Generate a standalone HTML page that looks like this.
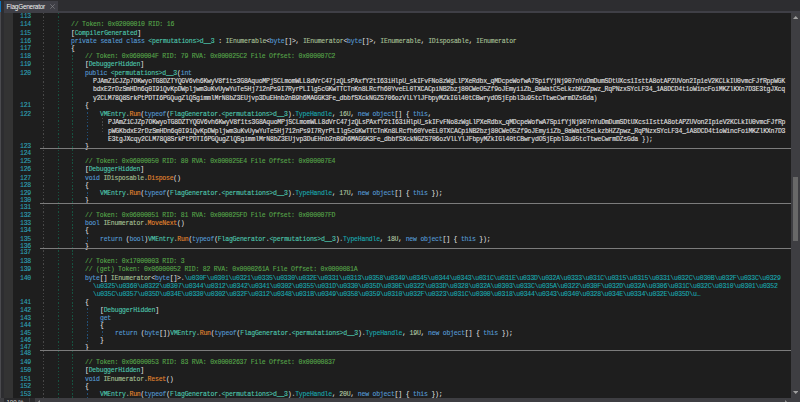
<!DOCTYPE html>
<html><head><meta charset="utf-8"><title>FlagGenerator</title>
<style>
html,body{margin:0;padding:0;background:#1e1e1e;}
body{width:800px;height:402px;overflow:hidden;position:relative;font-family:"Liberation Mono",monospace;font-size:6.5000px;line-height:8.0px;color:#dcdcdc;}
#tabbar{position:absolute;left:0;top:0;width:800px;height:12.5px;background:#2d2d30;}
#tabline{position:absolute;left:0;top:11px;width:800px;height:1.5px;background:#3f3f46;}
#tab{position:absolute;left:3.9px;top:1px;width:54.2px;height:11.3px;background:#3f3f46;}
#tabtxt{position:absolute;left:6.6px;top:1.7px;font-family:"Liberation Sans",sans-serif;font-size:6.4px;line-height:9px;color:#f1f1f1;white-space:pre;letter-spacing:-0.22px;}
#tabx{position:absolute;left:50px;top:4.1px;width:5px;height:5px;}
#leftedge{position:absolute;left:0;top:0;width:4px;height:402px;background:#2d2d30;}
#leftdark{position:absolute;left:0;top:0;width:4px;height:12px;background:#2d2d30;}
#leftlight{position:absolute;left:0;top:12px;width:0.8px;height:390px;background:#4a4a4e;}
#blue{position:absolute;left:0;top:1px;width:1.1px;height:11px;background:#1272b8;}
#code{position:absolute;left:0;top:0;width:791px;height:398px;overflow:hidden;}
#margin{position:absolute;left:4px;top:12.6px;width:9px;height:385.4px;background:#333333;}
#vscroll{position:absolute;left:791px;top:12.6px;width:9px;height:389.4px;background:#3e3e42;}
#thumb{position:absolute;left:793px;top:177.3px;width:5px;height:63.3px;background:#686868;}
#hscroll{position:absolute;left:0;top:397.8px;width:800px;height:4.2px;background:#3e3e42;}
#zoom{position:absolute;left:4.2px;top:398.4px;width:24.8px;height:4px;background:#29292b;}
#zoom2{position:absolute;left:30px;top:398.4px;width:5px;height:4px;background:#29292b;}
#zoomtxt{position:absolute;left:6.5px;top:399.4px;font-family:"Liberation Sans",sans-serif;font-size:6px;line-height:7px;color:#d8d8d8;white-space:pre;}
.ln,.row{letter-spacing:-0.2200px;-webkit-text-stroke:0.1px;}
.ln{position:absolute;top:0;transform-origin:0 0;left:20.05px;color:#2fa3b8;white-space:pre;height:8.0px;}
.row{position:absolute;top:0;transform-origin:0 0;white-space:pre;height:8.0px;}
.sep{position:absolute;left:40px;width:751px;height:1px;background:#7c7c7c;}
.g{position:absolute;width:1px;}
.c{color:#57a64a} .k{color:#569cd6} .t{color:#4ec9b0} .i{color:#a9c298} .m{color:#e3862f}
.n{color:#b5cea8} .p{color:#dcdcdc} .a{color:#e0e0e0} .h{color:#c0c0c0} .r{color:#1aa9b0} .o{color:#b4b4b4}
</style></head><body>
<div id="tabbar"></div><div id="tabline"></div>
<div id="leftedge"></div><div id="leftdark"></div><div id="leftlight"></div><div id="blue"></div>
<div id="tab"></div><div id="tabtxt">FlagGenerator</div>
<svg id="tabx" viewBox="0 0 5 5"><path d="M0.3 0.3L4.7 4.7M4.7 0.3L0.3 4.7" stroke="#8e8e92" stroke-width="0.6" fill="none"/></svg>
<div id="margin"></div>
<div id="code">
<div class="g" style="left:43.00px;top:12.50px;height:385.50px;background-image:repeating-linear-gradient(to bottom,#484848 0 1.4px,transparent 1.4px 3.25px)"></div>
<div class="g" style="left:57.80px;top:12.50px;height:385.50px;background-image:repeating-linear-gradient(to bottom,#175240 0 1.4px,transparent 1.4px 3.25px)"></div>
<div class="g" style="left:72.30px;top:52.00px;height:346.00px;background-image:repeating-linear-gradient(to bottom,#175240 0 1.4px,transparent 1.4px 3.25px)"></div>
<div class="g" style="left:87.00px;top:109.00px;height:32.00px;background-image:repeating-linear-gradient(to bottom,#224f77 0 1.4px,transparent 1.4px 3.25px)"></div>
<div class="g" style="left:87.00px;top:189.00px;height:6.50px;background-image:repeating-linear-gradient(to bottom,#224f77 0 1.4px,transparent 1.4px 3.25px)"></div>
<div class="g" style="left:87.00px;top:234.00px;height:7.50px;background-image:repeating-linear-gradient(to bottom,#224f77 0 1.4px,transparent 1.4px 3.25px)"></div>
<div class="g" style="left:87.00px;top:305.00px;height:37.50px;background-image:repeating-linear-gradient(to bottom,#224f77 0 1.4px,transparent 1.4px 3.25px)"></div>
<div class="g" style="left:87.00px;top:390.00px;height:8.00px;background-image:repeating-linear-gradient(to bottom,#224f77 0 1.4px,transparent 1.4px 3.25px)"></div>
<div class="g" style="left:101.70px;top:328.00px;height:8.00px;background-image:repeating-linear-gradient(to bottom,#224f77 0 1.4px,transparent 1.4px 3.25px)"></div>
<div class="g" style="left:102.00px;top:117.50px;height:16.50px;background-image:repeating-linear-gradient(to bottom,#484848 0 1.4px,transparent 1.4px 3.25px)"></div>
<div class="ln" style="transform:translateY(13.0px) rotate(0.01deg)">113</div>
<div class="ln" style="transform:translateY(21.0px) rotate(0.01deg)">114</div>
<div class="row" style="left:70.74px;transform:translateY(21.0px) rotate(0.01deg)"><span class="c">// Token: 0x02000010 RID: 16</span></div>
<div class="ln" style="transform:translateY(29.5px) rotate(0.01deg)">115</div>
<div class="row" style="left:70.74px;transform:translateY(29.5px) rotate(0.01deg)"><span class="p">[</span><span class="t">CompilerGenerated</span><span class="p">]</span></div>
<div class="ln" style="transform:translateY(37.5px) rotate(0.01deg)">116</div>
<div class="row" style="left:70.74px;transform:translateY(37.5px) rotate(0.01deg)"><span class="k">private sealed class </span><span class="t">&lt;permutations&gt;d__3</span><span class="p"> : </span><span class="i">IEnumerable</span><span class="p">&lt;</span><span class="k">byte</span><span class="p">[]&gt;, </span><span class="i">IEnumerator</span><span class="p">&lt;</span><span class="k">byte</span><span class="p">[]&gt;, </span><span class="i">IEnumerable</span><span class="p">, </span><span class="i">IDisposable</span><span class="p">, </span><span class="i">IEnumerator</span></div>
<div class="ln" style="transform:translateY(45.0px) rotate(0.01deg)">117</div>
<div class="row" style="left:70.74px;transform:translateY(45.0px) rotate(0.01deg)"><span class="p">{</span></div>
<div class="ln" style="transform:translateY(53.0px) rotate(0.01deg)">118</div>
<div class="row" style="left:85.46px;transform:translateY(53.0px) rotate(0.01deg)"><span class="c">// Token: 0x0600004F RID: 79 RVA: 0x000025C2 File Offset: 0x000007C2</span></div>
<div class="ln" style="transform:translateY(61.0px) rotate(0.01deg)">119</div>
<div class="row" style="left:85.46px;transform:translateY(61.0px) rotate(0.01deg)"><span class="p">[</span><span class="t">DebuggerHidden</span><span class="p">]</span></div>
<div class="ln" style="transform:translateY(70.0px) rotate(0.01deg)">120</div>
<div class="row" style="left:85.46px;transform:translateY(70.0px) rotate(0.01deg)"><span class="k">public </span><span class="t">&lt;permutations&gt;d__3</span><span class="p">(</span><span class="k">int</span></div>
<div class="row" style="left:92.82px;transform:translateY(78.0px) rotate(0.01deg)"><span class="a">PJAmZ1CJZp7OKwyoTG8DZTYQGV6vh6KwyV8f1ts3G8AquoMPjSCLmomWLL8dVrC47jzQLsPAxfY2tI63iHlpU_skIFvFNo8zWgLlPXeRdbx_qMDcpeWofwA7SpifYjNj907nYuDmDumSDtUXcs1IsttA8otAPZUVon2Ip1eV2KCLkIU0vmcFJfRppWGK</span></div>
<div class="row" style="left:92.82px;transform:translateY(86.0px) rotate(0.01deg)"><span class="a">bdxE2rDzSmHDn6q0I91QvKpDWpljwm3uKvUywYuTe5Hj712nPs9I7RyrPLIlg5cGKwTTCTnKn8LRcfh60YveEL0TXCACpiNB2bzj80CWeO5Zf9oJEmyiiZb_0aWatC5eLkzbHZZpwz_RqPNzxSYcLF34_1A8DCD4t1oWincFoiMKZlKXn7D3E3tgJXcq</span></div>
<div class="row" style="left:92.82px;transform:translateY(94.5px) rotate(0.01deg)"><span class="a">y2CLM78Q8SrkPtPDTI6PGQugZlQSgimmlMrN8bZ3EUjvp3DuEHnb2nB9h6MAGGK3Fe_dbbfSXckNGZS706ozVlLYlJFbpyMZkIGl40tCBwrydOSjEpbl3u95tcTtweCwrmDZsGda</span><span class="p">)</span></div>
<div class="ln" style="transform:translateY(102.0px) rotate(0.01deg)">121</div>
<div class="row" style="left:85.46px;transform:translateY(102.0px) rotate(0.01deg)"><span class="p">{</span></div>
<div class="ln" style="transform:translateY(110.5px) rotate(0.01deg)">122</div>
<div class="row" style="left:100.18px;transform:translateY(110.5px) rotate(0.01deg)"><span class="t">VMEntry</span><span class="o">.</span><span class="m">Run</span><span class="p">(</span><span class="k">typeof</span><span class="p">(</span><span class="t">FlagGenerator</span><span class="o">.</span><span class="t">&lt;permutations&gt;d__3</span><span class="p">)</span><span class="o">.</span><span class="r">TypeHandle</span><span class="p">, </span><span class="n">16U</span><span class="p">, </span><span class="k">new</span><span class="p"> </span><span class="k">object</span><span class="p">[] { </span><span class="k">this</span><span class="p">,</span></div>
<div class="row" style="left:107.54px;transform:translateY(119.0px) rotate(0.01deg)"><span class="a">PJAmZ1CJZp7OKwyoTG8DZTYQGV6vh6KwyV8f1ts3G8AquoMPjSCLmomWLL8dVrC47jzQLsPAxfY2tI63iHlpU_skIFvFNo8zWgLlPXeRdbx_qMDcpeWofwA7SpifYjNj907nYuDmDumSDtUXcs1IsttA8otAPZUVon2Ip1eV2KCLkIU0vmcFJfRp</span></div>
<div class="row" style="left:107.54px;transform:translateY(127.5px) rotate(0.01deg)"><span class="a">pWGKbdxE2rDzSmHDn6q0I91QvKpDWpljwm3uKvUywYuTe5Hj712nPs9I7RyrPLIlg5cGKwTTCTnKn8LRcfh60YveEL0TXCACpiNB2bzj80CWeO5Zf9oJEmyiiZb_0aWatC5eLkzbHZZpwz_RqPNzxSYcLF34_1A8DCD4t1oWincFoiMKZlKXn7D3</span></div>
<div class="row" style="left:107.54px;transform:translateY(135.5px) rotate(0.01deg)"><span class="a">E3tgJXcqy2CLM78Q8SrkPtPDTI6PGQugZlQSgimmlMrN8bZ3EUjvp3DuEHnb2nB9h6MAGGK3Fe_dbbfSXckNGZS706ozVlLYlJFbpyMZkIGl40tCBwrydOSjEpbl3u95tcTtweCwrmDZsGda</span><span class="p"> });</span></div>
<div class="ln" style="transform:translateY(142.5px) rotate(0.01deg)">123</div>
<div class="row" style="left:85.46px;transform:translateY(142.5px) rotate(0.01deg)"><span class="p">}</span></div>
<div class="ln" style="transform:translateY(149.5px) rotate(0.01deg)">124</div>
<div class="ln" style="transform:translateY(158.0px) rotate(0.01deg)">125</div>
<div class="row" style="left:85.46px;transform:translateY(158.0px) rotate(0.01deg)"><span class="c">// Token: 0x06000050 RID: 80 RVA: 0x000025E4 File Offset: 0x000007E4</span></div>
<div class="ln" style="transform:translateY(166.0px) rotate(0.01deg)">126</div>
<div class="row" style="left:85.46px;transform:translateY(166.0px) rotate(0.01deg)"><span class="p">[</span><span class="t">DebuggerHidden</span><span class="p">]</span></div>
<div class="ln" style="transform:translateY(174.5px) rotate(0.01deg)">127</div>
<div class="row" style="left:85.46px;transform:translateY(174.5px) rotate(0.01deg)"><span class="k">void </span><span class="i">IDisposable</span><span class="o">.</span><span class="m">Dispose</span><span class="p">()</span></div>
<div class="ln" style="transform:translateY(182.0px) rotate(0.01deg)">128</div>
<div class="row" style="left:85.46px;transform:translateY(182.0px) rotate(0.01deg)"><span class="p">{</span></div>
<div class="ln" style="transform:translateY(189.5px) rotate(0.01deg)">129</div>
<div class="row" style="left:100.18px;transform:translateY(189.5px) rotate(0.01deg)"><span class="t">VMEntry</span><span class="o">.</span><span class="m">Run</span><span class="p">(</span><span class="k">typeof</span><span class="p">(</span><span class="t">FlagGenerator</span><span class="o">.</span><span class="t">&lt;permutations&gt;d__3</span><span class="p">)</span><span class="o">.</span><span class="r">TypeHandle</span><span class="p">, </span><span class="n">17U</span><span class="p">, </span><span class="k">new</span><span class="p"> </span><span class="k">object</span><span class="p">[] { </span><span class="k">this</span><span class="p"> });</span></div>
<div class="ln" style="transform:translateY(196.5px) rotate(0.01deg)">130</div>
<div class="row" style="left:85.46px;transform:translateY(196.5px) rotate(0.01deg)"><span class="p">}</span></div>
<div class="ln" style="transform:translateY(203.5px) rotate(0.01deg)">131</div>
<div class="ln" style="transform:translateY(212.0px) rotate(0.01deg)">132</div>
<div class="row" style="left:85.46px;transform:translateY(212.0px) rotate(0.01deg)"><span class="c">// Token: 0x06000051 RID: 81 RVA: 0x000025FD File Offset: 0x000007FD</span></div>
<div class="ln" style="transform:translateY(220.0px) rotate(0.01deg)">133</div>
<div class="row" style="left:85.46px;transform:translateY(220.0px) rotate(0.01deg)"><span class="k">bool </span><span class="i">IEnumerator</span><span class="o">.</span><span class="m">MoveNext</span><span class="p">()</span></div>
<div class="ln" style="transform:translateY(227.0px) rotate(0.01deg)">134</div>
<div class="row" style="left:85.46px;transform:translateY(227.0px) rotate(0.01deg)"><span class="p">{</span></div>
<div class="ln" style="transform:translateY(235.5px) rotate(0.01deg)">135</div>
<div class="row" style="left:100.18px;transform:translateY(235.5px) rotate(0.01deg)"><span class="k">return</span><span class="p"> (</span><span class="k">bool</span><span class="p">)</span><span class="t">VMEntry</span><span class="o">.</span><span class="m">Run</span><span class="p">(</span><span class="k">typeof</span><span class="p">(</span><span class="t">FlagGenerator</span><span class="o">.</span><span class="t">&lt;permutations&gt;d__3</span><span class="p">)</span><span class="o">.</span><span class="r">TypeHandle</span><span class="p">, </span><span class="n">18U</span><span class="p">, </span><span class="k">new</span><span class="p"> </span><span class="k">object</span><span class="p">[] { </span><span class="k">this</span><span class="p"> });</span></div>
<div class="ln" style="transform:translateY(243.0px) rotate(0.01deg)">136</div>
<div class="row" style="left:85.46px;transform:translateY(243.0px) rotate(0.01deg)"><span class="p">}</span></div>
<div class="ln" style="transform:translateY(248.5px) rotate(0.01deg)">137</div>
<div class="ln" style="transform:translateY(257.5px) rotate(0.01deg)">138</div>
<div class="row" style="left:85.46px;transform:translateY(257.5px) rotate(0.01deg)"><span class="c">// Token: 0x17000003 RID: 3</span></div>
<div class="ln" style="transform:translateY(266.0px) rotate(0.01deg)">139</div>
<div class="row" style="left:85.46px;transform:translateY(266.0px) rotate(0.01deg)"><span class="c">// (get) Token: 0x06000052 RID: 82 RVA: 0x0000261A File Offset: 0x0000081A</span></div>
<div class="ln" style="transform:translateY(274.5px) rotate(0.01deg)">140</div>
<div class="row" style="left:85.46px;transform:translateY(274.5px) rotate(0.01deg)"><span class="k">byte</span><span class="p">[] </span><span class="i">IEnumerator</span><span class="p">&lt;</span><span class="k">byte</span><span class="p">[]&gt;</span><span class="o">.</span><span class="r">\u030F\u0301\u0321\u0335\u0330\u032E\u0331\u0313\u0358\u0349\u0345\u0344\u0343\u031C\u031E\u033D\u032A\u0333\u031C\u0315\u0315\u0331\u032C\u030B\u032F\u033C\u0329</span></div>
<div class="row" style="left:92.82px;transform:translateY(282.5px) rotate(0.01deg)"><span class="r">\u0325\u0360\u0322\u0307\u0344\u0312\u0342\u0341\u0302\u0355\u031D\u0330\u035D\u030E\u0322\u033D\u0328\u032A\u0303\u033C\u035A\u0322\u030F\u032D\u032A\u0306\u031C\u032C\u0310\u0301\u0352</span></div>
<div class="row" style="left:92.82px;transform:translateY(290.5px) rotate(0.01deg)"><span class="r">\u035C\u0357\u035D\u034E\u0330\u0302\u032F\u0312\u0348\u031B\u0349\u0358\u0359\u0310\u032F\u0323\u031C\u0300\u0318\u0344\u0343\u0340\u0328\u034E\u0334\u032E\u035D\u…</span></div>
<div class="ln" style="transform:translateY(298.5px) rotate(0.01deg)">141</div>
<div class="row" style="left:85.46px;transform:translateY(298.5px) rotate(0.01deg)"><span class="p">{</span></div>
<div class="ln" style="transform:translateY(306.5px) rotate(0.01deg)">142</div>
<div class="row" style="left:100.18px;transform:translateY(306.5px) rotate(0.01deg)"><span class="p">[</span><span class="t">DebuggerHidden</span><span class="p">]</span></div>
<div class="ln" style="transform:translateY(315.0px) rotate(0.01deg)">143</div>
<div class="row" style="left:100.18px;transform:translateY(315.0px) rotate(0.01deg)"><span class="k">get</span></div>
<div class="ln" style="transform:translateY(322.0px) rotate(0.01deg)">144</div>
<div class="row" style="left:100.18px;transform:translateY(322.0px) rotate(0.01deg)"><span class="p">{</span></div>
<div class="ln" style="transform:translateY(330.0px) rotate(0.01deg)">145</div>
<div class="row" style="left:114.90px;transform:translateY(330.0px) rotate(0.01deg)"><span class="k">return</span><span class="p"> (</span><span class="k">byte</span><span class="p">[])</span><span class="t">VMEntry</span><span class="o">.</span><span class="m">Run</span><span class="p">(</span><span class="k">typeof</span><span class="p">(</span><span class="t">FlagGenerator</span><span class="o">.</span><span class="t">&lt;permutations&gt;d__3</span><span class="p">)</span><span class="o">.</span><span class="r">TypeHandle</span><span class="p">, </span><span class="n">19U</span><span class="p">, </span><span class="k">new</span><span class="p"> </span><span class="k">object</span><span class="p">[] { </span><span class="k">this</span><span class="p"> });</span></div>
<div class="ln" style="transform:translateY(337.0px) rotate(0.01deg)">146</div>
<div class="row" style="left:100.18px;transform:translateY(337.0px) rotate(0.01deg)"><span class="p">}</span></div>
<div class="ln" style="transform:translateY(344.0px) rotate(0.01deg)">147</div>
<div class="row" style="left:85.46px;transform:translateY(344.0px) rotate(0.01deg)"><span class="p">}</span></div>
<div class="ln" style="transform:translateY(350.0px) rotate(0.01deg)">148</div>
<div class="ln" style="transform:translateY(359.0px) rotate(0.01deg)">149</div>
<div class="row" style="left:85.46px;transform:translateY(359.0px) rotate(0.01deg)"><span class="c">// Token: 0x06000053 RID: 83 RVA: 0x00002637 File Offset: 0x00000837</span></div>
<div class="ln" style="transform:translateY(367.0px) rotate(0.01deg)">150</div>
<div class="row" style="left:85.46px;transform:translateY(367.0px) rotate(0.01deg)"><span class="p">[</span><span class="t">DebuggerHidden</span><span class="p">]</span></div>
<div class="ln" style="transform:translateY(376.0px) rotate(0.01deg)">151</div>
<div class="row" style="left:85.46px;transform:translateY(376.0px) rotate(0.01deg)"><span class="k">void </span><span class="i">IEnumerator</span><span class="o">.</span><span class="m">Reset</span><span class="p">()</span></div>
<div class="ln" style="transform:translateY(382.5px) rotate(0.01deg)">152</div>
<div class="row" style="left:85.46px;transform:translateY(382.5px) rotate(0.01deg)"><span class="p">{</span></div>
<div class="ln" style="transform:translateY(391.0px) rotate(0.01deg)">153</div>
<div class="row" style="left:100.18px;transform:translateY(391.0px) rotate(0.01deg)"><span class="t">VMEntry</span><span class="o">.</span><span class="m">Run</span><span class="p">(</span><span class="k">typeof</span><span class="p">(</span><span class="t">FlagGenerator</span><span class="o">.</span><span class="t">&lt;permutations&gt;d__3</span><span class="p">)</span><span class="o">.</span><span class="r">TypeHandle</span><span class="p">, </span><span class="n">20U</span><span class="p">, </span><span class="k">new</span><span class="p"> </span><span class="k">object</span><span class="p">[] { </span><span class="k">this</span><span class="p"> });</span></div>
<div class="sep" style="top:147.60px"></div>
<div class="sep" style="top:202.90px"></div>
<div class="sep" style="top:248.00px"></div>
<div class="sep" style="top:349.50px"></div>
</div>
<div id="vscroll"></div><div id="thumb"></div>
<svg style="position:absolute;left:792.9px;top:16px;width:5.4px;height:3px" viewBox="0 0 5.4 3"><path d="M0 3L2.7 0L5.4 3Z" fill="#a0a0a0"/></svg>
<svg style="position:absolute;left:792.9px;top:391.2px;width:5.4px;height:3px" viewBox="0 0 5.4 3"><path d="M0 0L2.7 3L5.4 0Z" fill="#a0a0a0"/></svg>
<div id="hscroll"></div>
<svg style="position:absolute;left:38.4px;top:400.2px;width:2px;height:3.6px" viewBox="0 0 2 3.6"><path d="M2 0L0 1.8L2 3.6Z" fill="#8c8c8c"/></svg>
<svg style="position:absolute;left:785.2px;top:400.2px;width:2px;height:3.6px" viewBox="0 0 2 3.6"><path d="M0 0L2 1.8L0 3.6Z" fill="#8c8c8c"/></svg><div id="zoom"></div><div id="zoom2"></div><div id="zoomtxt">100 %</div>
</body></html>
